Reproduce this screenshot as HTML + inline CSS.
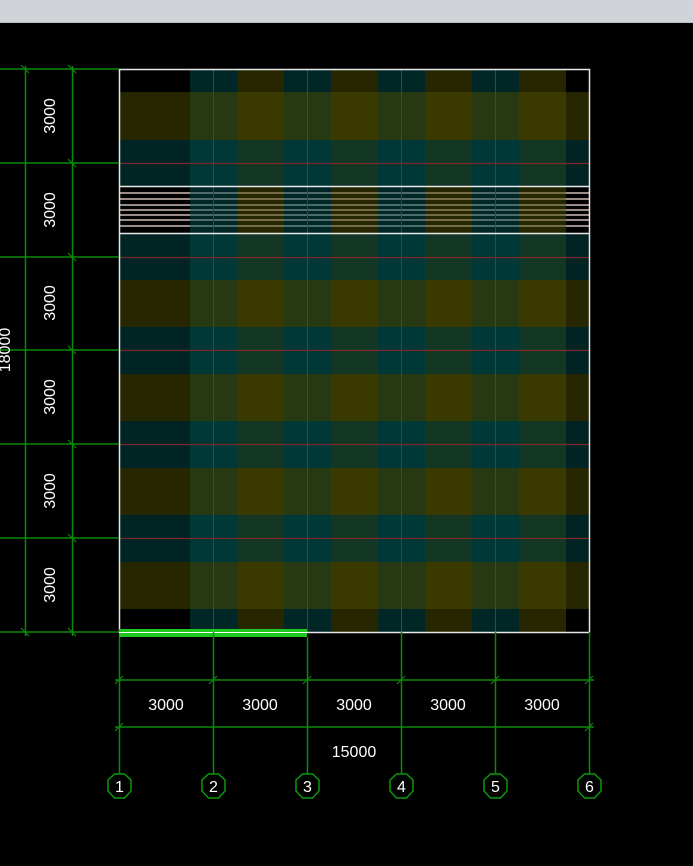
<!DOCTYPE html>
<html><head><meta charset="utf-8"><style>
html,body{margin:0;padding:0;background:#000;width:693px;height:866px;overflow:hidden}
#top{position:absolute;left:0;top:0;width:693px;height:22px;background:#d0d3d8;border-bottom:1px solid #b8bbc0}
svg{position:absolute;left:0;top:0}
text{font-family:"Liberation Sans","DejaVu Sans",sans-serif;fill:#fff;font-size:16px}
</style></head><body>
<div id="top"></div>
<svg width="693" height="866" viewBox="0 0 693 866">
<g stroke="#9a8c88" stroke-width="2">
<line x1="119" x2="589" y1="193" y2="193"/><line x1="119" x2="589" y1="199" y2="199"/>
<line x1="119" x2="589" y1="205" y2="205"/><line x1="119" x2="589" y1="210" y2="210"/>
<line x1="119" x2="589" y1="215" y2="215"/><line x1="119" x2="589" y1="220" y2="220"/>
<line x1="119" x2="589" y1="226" y2="226"/>
</g>
<g fill="#004c4c" fill-opacity="0.5">
<rect x="190" y="69" width="47" height="563"/><rect x="284" y="69" width="47" height="563"/>
<rect x="378" y="69" width="47" height="563"/><rect x="472" y="69" width="47" height="563"/>
</g>
<g fill="#4c4c00" fill-opacity="0.5">
<rect x="237" y="69" width="47" height="563"/><rect x="331" y="69" width="47" height="563"/>
<rect x="425" y="69" width="47" height="563"/><rect x="519" y="69" width="47" height="563"/>
</g>
<g fill="#4c4c00" fill-opacity="0.5">
<rect x="119" y="92" width="470" height="48"/><rect x="119" y="280" width="470" height="47"/>
<rect x="119" y="374" width="470" height="47"/><rect x="119" y="468" width="470" height="47"/>
<rect x="119" y="562" width="470" height="47"/>
</g>
<g fill="#004848" fill-opacity="0.5">
<rect x="119" y="140" width="470" height="46"/><rect x="119" y="233" width="470" height="47"/>
<rect x="119" y="327" width="470" height="47"/><rect x="119" y="421" width="470" height="47"/>
<rect x="119" y="515" width="470" height="47"/>
</g>
<g stroke="#7a2a2a" stroke-width="1.2">
<line x1="119" x2="589" y1="163.5" y2="163.5"/><line x1="119" x2="589" y1="257.5" y2="257.5"/>
<line x1="119" x2="589" y1="350.5" y2="350.5"/><line x1="119" x2="589" y1="444.5" y2="444.5"/>
<line x1="119" x2="589" y1="538.5" y2="538.5"/>
</g>
<g stroke="#5a3a3a" stroke-width="1">
<line x1="213.5" x2="213.5" y1="69" y2="632"/><line x1="307.5" x2="307.5" y1="69" y2="632"/>
<line x1="401.5" x2="401.5" y1="69" y2="632"/><line x1="495.5" x2="495.5" y1="69" y2="632"/>
</g>
<g stroke="#e8e8e8" fill="none" stroke-width="1.5">
<rect x="119.5" y="69.5" width="470" height="563"/>
<line x1="119" x2="589" y1="186.5" y2="186.5"/><line x1="119" x2="589" y1="233.5" y2="233.5"/>
</g>
<rect x="119" y="629" width="188" height="8" fill="#1ec81e"/>
<line x1="119" x2="307" y1="632.5" y2="632.5" stroke="#fff" stroke-width="1"/>
<g stroke="#0a8a0a" stroke-width="1.5">
<line x1="0" x2="119" y1="69" y2="69"/><line x1="0" x2="119" y1="163" y2="163"/>
<line x1="0" x2="119" y1="257" y2="257"/><line x1="0" x2="119" y1="350" y2="350"/>
<line x1="0" x2="119" y1="444" y2="444"/><line x1="0" x2="119" y1="538" y2="538"/>
<line x1="0" x2="119" y1="632" y2="632"/>
<line x1="25.5" x2="25.5" y1="66" y2="636"/><line x1="72.5" x2="72.5" y1="66" y2="636"/>
</g>
<g stroke="#0a8a0a" stroke-width="1.2">
<path d="M21 65l8 8M68 65l8 8M68 159l8 8M68 253l8 8M68 346l8 8M68 440l8 8M68 534l8 8M68 628l8 8M21 628l8 8"/>
</g>
<g style="font-size:17px">
<text transform="translate(55,116) rotate(-90)" text-anchor="middle">3000</text>
<text transform="translate(55,210) rotate(-90)" text-anchor="middle">3000</text>
<text transform="translate(55,303) rotate(-90)" text-anchor="middle">3000</text>
<text transform="translate(55,397) rotate(-90)" text-anchor="middle">3000</text>
<text transform="translate(55,491) rotate(-90)" text-anchor="middle">3000</text>
<text transform="translate(55,585) rotate(-90)" text-anchor="middle">3000</text>
<text transform="translate(10,350) rotate(-90)" text-anchor="middle">18000</text>
</g>
<g stroke="#0a8a0a" stroke-width="1.5">
<line x1="119.5" x2="119.5" y1="637" y2="774"/><line x1="213.5" x2="213.5" y1="632" y2="774"/>
<line x1="307.5" x2="307.5" y1="637" y2="774"/><line x1="401.5" x2="401.5" y1="632" y2="774"/>
<line x1="495.5" x2="495.5" y1="632" y2="774"/><line x1="589.5" x2="589.5" y1="632" y2="774"/>
<line x1="115" x2="594" y1="680" y2="680"/><line x1="115" x2="594" y1="727" y2="727"/>
</g>
<g stroke="#0a8a0a" stroke-width="1.2">
<path d="M115 684l8 -8M209 684l8 -8M303 684l8 -8M397 684l8 -8M491 684l8 -8M585 684l8 -8M115 731l8 -8M585 731l8 -8"/>
</g>
<g text-anchor="middle" style="font-size:17px">
<text x="166" y="710">3000</text><text x="260" y="710">3000</text><text x="354" y="710">3000</text>
<text x="448" y="710">3000</text><text x="542" y="710">3000</text>
<text x="354" y="757">15000</text>
</g>
<g stroke="#0a9a0a" stroke-width="1.5" fill="#000">
<polygon points="114.5,774 124.5,774 131,780 131,791 124.5,798 114.5,798 108,791 108,780"/>
<polygon points="114.5,774 124.5,774 131,780 131,791 124.5,798 114.5,798 108,791 108,780" transform="translate(94,0)"/>
<polygon points="114.5,774 124.5,774 131,780 131,791 124.5,798 114.5,798 108,791 108,780" transform="translate(188,0)"/>
<polygon points="114.5,774 124.5,774 131,780 131,791 124.5,798 114.5,798 108,791 108,780" transform="translate(282,0)"/>
<polygon points="114.5,774 124.5,774 131,780 131,791 124.5,798 114.5,798 108,791 108,780" transform="translate(376,0)"/>
<polygon points="114.5,774 124.5,774 131,780 131,791 124.5,798 114.5,798 108,791 108,780" transform="translate(470,0)"/>
</g>
<g text-anchor="middle" style="font-size:17px">
<text x="119.5" y="792">1</text><text x="213.5" y="792">2</text><text x="307.5" y="792">3</text>
<text x="401.5" y="792">4</text><text x="495.5" y="792">5</text><text x="589.5" y="792">6</text>
</g>
</svg>
</body></html>
